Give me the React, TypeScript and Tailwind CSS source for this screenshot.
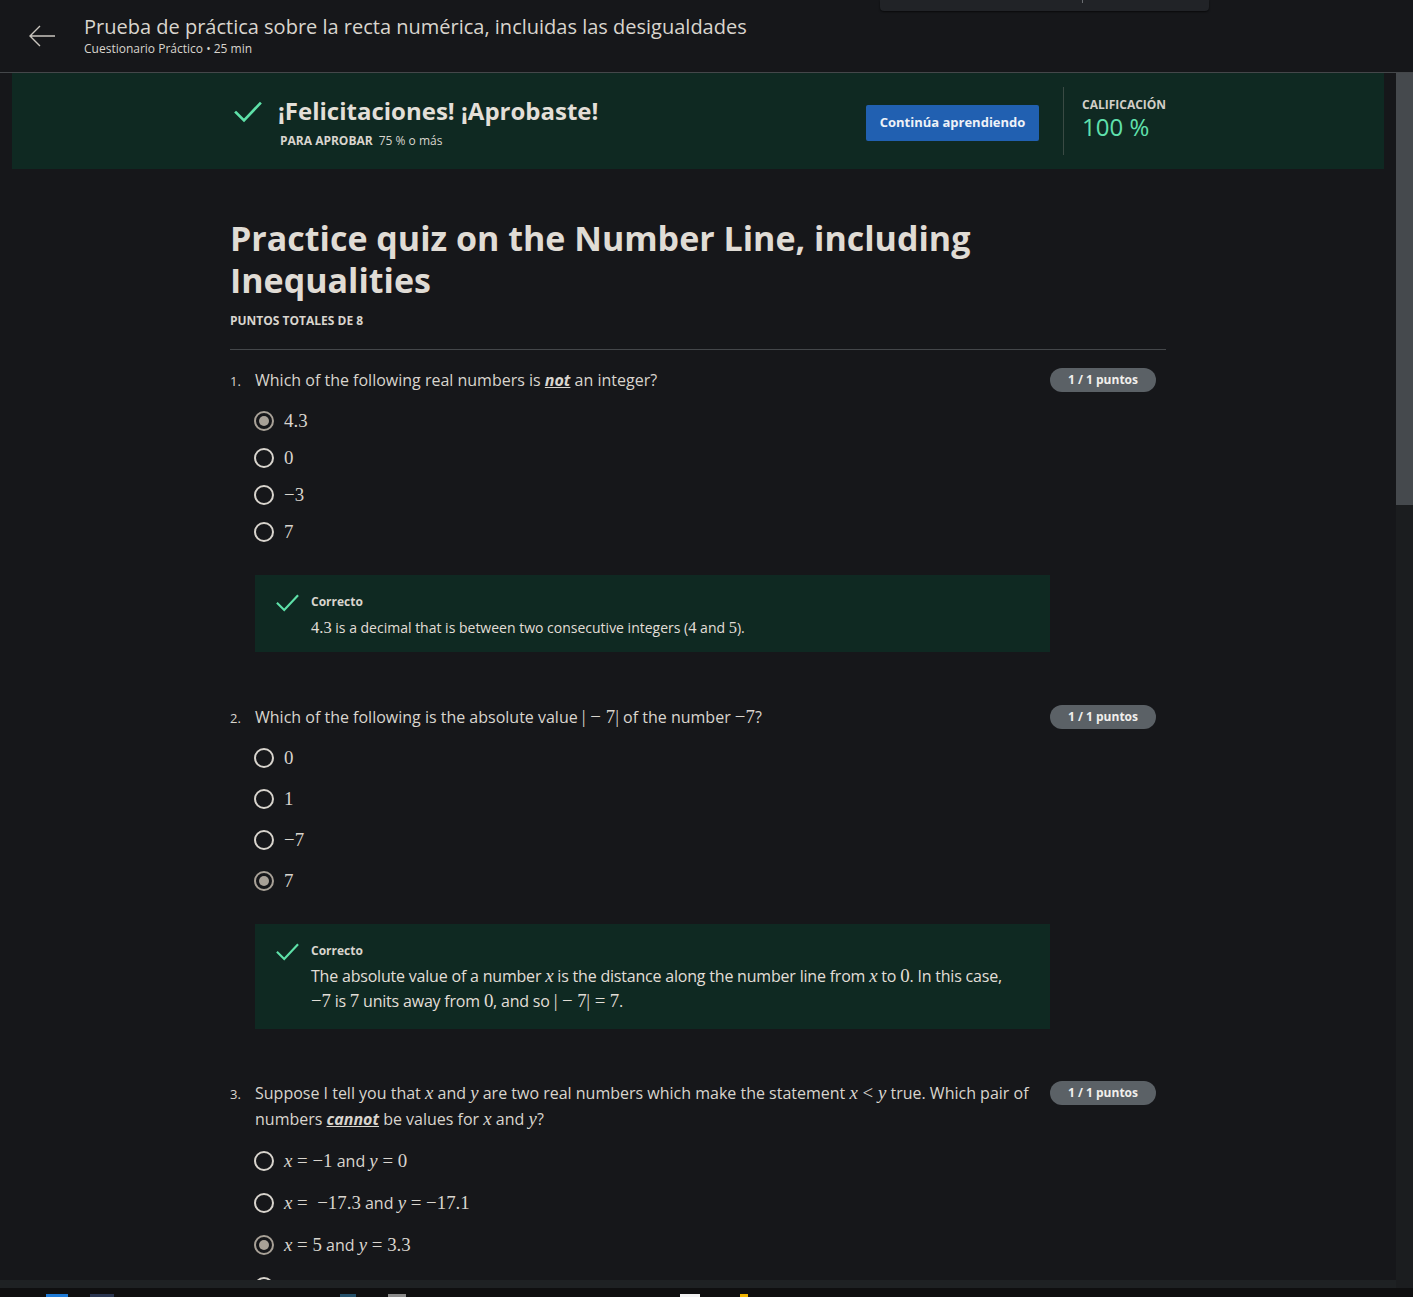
import React from "react";

const M = ({ children, i }: { children: React.ReactNode; i?: boolean }) => (
  <span
    className={`font-['Liberation_Serif','DejaVu_Serif',serif] text-[1.18em] leading-none ${i ? "italic" : ""}`}
  >
    {children}
  </span>
);

const Op = ({ children }: { children: React.ReactNode }) => <span className="mx-[0.25em]">{children}</span>;

function Check({ className }: { className?: string }) {
  return (
    <svg viewBox="0 0 28 22" className={className} fill="none">
      <path d="M2 11.5 L10 19.5 L26 2.5" stroke="#5ee0a8" strokeWidth="2.6" strokeLinecap="square" />
    </svg>
  );
}

function Radio({ checked }: { checked?: boolean }) {
  if (checked) {
    return (
      <span className="flex h-5 w-5 shrink-0 items-center justify-center rounded-full border-2 border-[#a8a197]">
        <span className="h-[10px] w-[10px] rounded-full bg-[#a8a197]" />
      </span>
    );
  }
  return <span className="h-5 w-5 shrink-0 rounded-full border-2 border-[#d8d4cd]" />;
}

function Badge() {
  return (
    <span className="flex h-6 w-[106px] shrink-0 items-center justify-center rounded-full bg-[#5b6166] text-[12px] font-bold text-[#f1efec]">
      1 / 1 puntos
    </span>
  );
}

function Option({ checked, children, h }: { checked?: boolean; children?: React.ReactNode; h: string }) {
  return (
    <div className={`flex items-center gap-[10px] ${h}`}>
      <Radio checked={checked} />
      <span className="text-[16px] text-[#d9d5ce]">{children}</span>
    </div>
  );
}

function Feedback({ children, size, pb }: { children: React.ReactNode; size: string; pb: string }) {
  return (
    <div className={`ml-[25px] mr-[106px] flex gap-3 bg-[#0f2922] pl-[21px] pr-[28px] pt-[19px] ${pb}`}>
      <Check className="h-[18px] w-[23px] shrink-0" />
      <div>
        <div className="text-[12px] font-bold leading-[16px] text-[#d9d5ce]">Correcto</div>
        <div className={`mt-[5px] leading-[25px] text-[#e2ded7] ${size}`}>{children}</div>
      </div>
    </div>
  );
}

function Question({ n, children }: { n: number; children: React.ReactNode }) {
  return (
    <div className="flex items-start">
      <span className="w-[25px] shrink-0 pt-[2px] text-[13px] leading-[24px] text-[#d9d5ce]">{n}.</span>
      <div className="flex-1 text-[16px] leading-[26px] text-[#d9d5ce]">{children}</div>
      <div className="pt-[1px]">
        <Badge />
      </div>
    </div>
  );
}

export default function App() {
  return (
    <div className="relative flex h-[1297px] w-[1413px] flex-col overflow-hidden bg-[#16171a] font-['Open_Sans',sans-serif]">
      {/* dropdown overhang */}
      <div className="absolute left-[880px] top-0 z-10 h-[11px] w-[329px] rounded-b-[4px] bg-[#212327] shadow-[0_1px_2px_rgba(0,0,0,0.6)]">
        <span className="absolute left-[202px] top-0 h-[3px] w-px bg-[#6b6e72]" />
      </div>

      <header className="flex h-[73px] shrink-0 items-center border-b border-[#44474a]">
        <div className="flex w-[84px] justify-center">
          <svg viewBox="0 0 28 24" className="h-[24px] w-[28px]" fill="none">
            <path d="M27 12 H2 M12 2 L2 12 L12 22" stroke="#c9c5be" strokeWidth="1.4" />
          </svg>
        </div>
        <div className="-mt-[3px]">
          <div className="text-[20px] leading-[28px] text-[#d9d5ce]">
            Prueba de práctica sobre la recta numérica, incluidas las desigualdades
          </div>
          <div className="text-[12px] leading-[16px] text-[#d9d5ce]">Cuestionario Práctico • 25 min</div>
        </div>
      </header>

      <div className="flex min-h-0 flex-1">
        <main className="min-w-0 flex-1 overflow-hidden">
          <section className="mx-3 h-[96px] bg-[#0f2922]">
            <div className="mx-auto flex h-full w-[936px] items-center">
              <Check className="ml-[3px] mt-[28px] h-[22px] w-[30px] self-start" />
              <div className="ml-[15px] mt-[3px] flex-1">
                <div className="text-[24px] font-bold leading-[32px] text-[#e3dfd8]">¡Felicitaciones! ¡Aprobaste!</div>
                <div className="mt-[5px] text-[12px] text-[#d9d5ce]">
                  <span className="ml-[2px] font-bold">PARA APROBAR</span>
                  <span className="ml-[6px]">75 % o más</span>
                </div>
              </div>
              <button className="mt-[4px] h-[36px] w-[173px] rounded-[2px] bg-[#2160b1] text-[13px] font-bold text-[#eef2f8]">
                Continúa aprendiendo
              </button>
              <div className="ml-6 h-[68px] w-px bg-[#3a4a44]" />
              <div className="ml-[18px] w-[84px] self-start pt-[23px]">
                <div className="text-[12px] font-bold leading-[18px] text-[#d2cec7]">CALIFICACIÓN</div>
                <div className="text-[24px] leading-[26px] text-[#5fe0ad]">100 %</div>
              </div>
            </div>
          </section>

          <div className="mx-auto w-[936px] pt-[48px]">
            <h1 className="w-[760px] text-[34px] font-bold leading-[42px] text-[#e0dcd5]">
              Practice quiz on the Number Line, including Inequalities
            </h1>
            <div className="mt-[12px] text-[12px] font-bold leading-[16px] text-[#d9d5ce]">PUNTOS TOTALES DE 8</div>
            <div className="mt-[20px] h-px w-full bg-[#44474a]" />

            <div className="mt-[17px] pr-[10px]">
              <Question n={1}>
                Which of the following real numbers is{" "}
                <em className="font-bold underline">not</em> an integer?
              </Question>
              <div className="ml-[24px] mt-[9px] flex flex-col">
                <Option h="h-[37px]" checked><M>4.3</M></Option>
                <Option h="h-[37px]"><M>0</M></Option>
                <Option h="h-[37px]"><M>−3</M></Option>
                <Option h="h-[37px]"><M>7</M></Option>
              </div>
              <div className="mt-[25px]">
                <Feedback size="text-[14px]" pb="pb-[12px]">
                  <M>4.3</M> is a decimal that is between two consecutive integers (<M>4</M> and <M>5</M>).
                </Feedback>
              </div>
            </div>

            <div className="mt-[52px] pr-[10px]">
              <Question n={2}>
                Which of the following is the absolute value <M>|<Op>−</Op>7|</M> of the number <M>−7</M>?
              </Question>
              <div className="ml-[24px] mt-[7px] flex flex-col">
                <Option h="h-[41px]"><M>0</M></Option>
                <Option h="h-[41px]"><M>1</M></Option>
                <Option h="h-[41px]"><M>−7</M></Option>
                <Option h="h-[41px]" checked><M>7</M></Option>
              </div>
              <div className="mt-[23px]">
                <Feedback size="text-[16px] tracking-[-0.2px]" pb="pb-[15px]">
                  The absolute value of a number <M i>x</M> is the distance along the number line from <M i>x</M> to <M>0</M>. In this case, <M>−7</M> is <M>7</M> units away from <M>0</M>, and so <M>|<Op>−</Op>7|<Op>=</Op>7</M>.
                </Feedback>
              </div>
            </div>

            <div className="mt-[51px] pr-[10px]">
              <Question n={3}>
                Suppose I tell you that <M i>x</M> and <M i>y</M> are two real numbers which make the statement <M><i>x</i><Op>&lt;</Op><i>y</i></M> true. Which pair of numbers{" "}
                <em className="font-bold underline">cannot</em> be values for <M i>x</M> and <M i>y</M>?
              </Question>
              <div className="ml-[24px] mt-[8px] flex flex-col">
                <Option h="h-[42px]"><M><i>x</i><Op>=</Op>−1</M> and <M><i>y</i><Op>=</Op>0</M></Option>
                <Option h="h-[42px]"><M><i>x</i><Op>=</Op> −17.3</M> and <M><i>y</i><Op>=</Op>−17.1</M></Option>
                <Option h="h-[42px]" checked><M><i>x</i><Op>=</Op>5</M> and <M><i>y</i><Op>=</Op>3.3</M></Option>
                <Option h="h-[42px]" />
              </div>
            </div>
          </div>
        </main>
        <div className="flex w-[17px] shrink-0 flex-col bg-[#1b1d1f]">
          <div className="h-[432px] bg-[#45494d]" />
        </div>
      </div>

      <div className="flex h-[8px] shrink-0">
        <div className="flex-1 bg-[#1e2123]" />
        <div className="w-[17px] bg-[#1b1d1f]" />
      </div>
      <div className="relative h-[9px] shrink-0 bg-[#0f0f10]">
        <span className="absolute left-[46px] top-[6px] h-[3px] w-[22px] bg-[#1e7ad6]" />
        <span className="absolute left-[90px] top-[6px] h-[3px] w-[24px] bg-[#2a3550]" />
        <span className="absolute left-[340px] top-[6px] h-[3px] w-[16px] bg-[#24506a]" />
        <span className="absolute left-[388px] top-[6px] h-[3px] w-[18px] bg-[#8a8a8a]" />
        <span className="absolute left-[680px] top-[6px] h-[3px] w-[20px] bg-[#f2f2f2]" />
        <span className="absolute left-[740px] top-[6px] h-[3px] w-[8px] bg-[#f0b400]" />
      </div>
    </div>
  );
}
